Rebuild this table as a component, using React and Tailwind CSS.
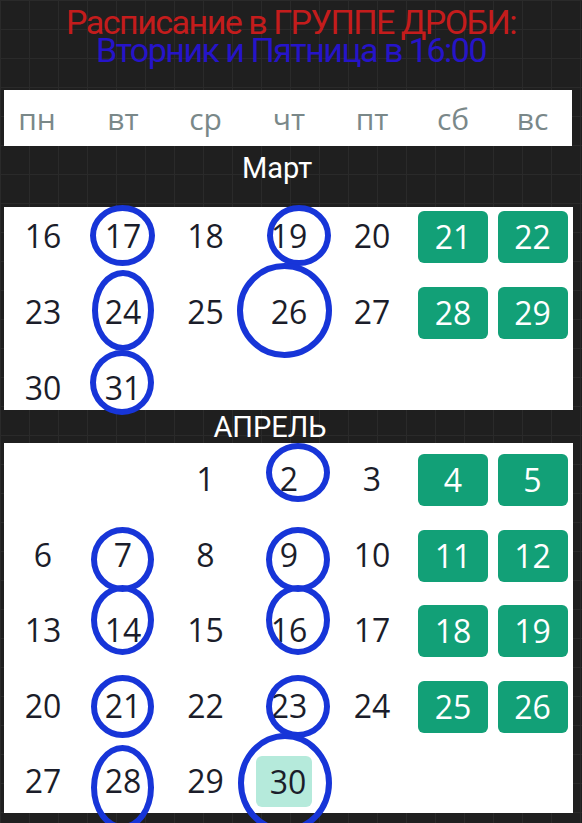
import React from 'react';

const cols = 'grid grid-cols-[78px_82px_83px_84px_82px_80px_79px]';
const num = "font-['Open_Sans',sans-serif] text-[32px] text-[#1b1d2a]";

const march = [
  [16, 17, 18, 19, 20, 21, 22],
  [23, 24, 25, 26, 27, 28, 29],
  [30, 31, null, null, null, null, null],
];

const april = [
  [null, null, 1, 2, 3, 4, 5],
  [6, 7, 8, 9, 10, 11, 12],
  [13, 14, 15, 16, 17, 18, 19],
  [20, 21, 22, 23, 24, 25, 26],
  [27, 28, 29, 30, null, null, null],
];

// hand-drawn marks over the dates
const marks = [
  'left-[90px] top-[205px] w-[65px] h-[61px]',
  'left-[267px] top-[205px] w-[64px] h-[61px]',
  'left-[92px] top-[270px] w-[62px] h-[81px]',
  'left-[237px] top-[263px] w-[95px] h-[95px]',
  'left-[90px] top-[350px] w-[64px] h-[65px]',
  'left-[266px] top-[443px] w-[64px] h-[59px]',
  'left-[91px] top-[527px] w-[63px] h-[65px]',
  'left-[266px] top-[527px] w-[64px] h-[65px]',
  'left-[91px] top-[585px] w-[63px] h-[70px]',
  'left-[266px] top-[585px] w-[64px] h-[70px]',
  'left-[91px] top-[675px] w-[63px] h-[63px]',
  'left-[266px] top-[675px] w-[64px] h-[63px]',
  'left-[91px] top-[745px] w-[63px] h-[85px]',
  'left-[238px] top-[733px] w-[94px] h-[100px]',
];

const Cell = ({ day, col, today }) => {
  if (day === null) return <div />;
  if (col >= 5) {
    return (
      <div className="flex items-start justify-center">
        <div className="flex h-[52px] w-[70px] items-center justify-center rounded-md bg-[#12a077] font-['Open_Sans',sans-serif] text-[32px] text-white">
          {day}
        </div>
      </div>
    );
  }
  if (today) {
    return (
      <div className="flex items-start justify-center">
        <div className={`ml-[-10px] flex h-[51px] w-[56px] items-center justify-center rounded-md bg-[#b5eadb] pl-[8px] ${num}`}>
          {day}
        </div>
      </div>
    );
  }
  return (
    <div className="flex items-start justify-center">
      <div className={`flex h-[50px] items-center justify-center ${num}`}>{day}</div>
    </div>
  );
};

const Month = ({ rows, rowClass }) => (
  <>
    {rows.map((r, i) => (
      <div key={i} className={`${cols} ${rowClass}`}>
        {r.map((d, j) => (
          <Cell key={j} day={d} col={j} today={d === 30 && j === 3} />
        ))}
      </div>
    ))}
  </>
);

export default function App() {
  return (
    <div className="relative h-[823px] w-[582px] overflow-hidden bg-[#1f1f1f] bg-[linear-gradient(to_right,#2a2a2a_1px,transparent_1px),linear-gradient(to_bottom,#2a2a2a_1px,transparent_1px)] bg-[size:29px_29px]">
      <div className="flex h-[90px] flex-col items-center pt-[8px] font-['Roboto',sans-serif] text-[34px] leading-[28px] tracking-[-1.5px]">
        <div className="text-[#c41c1c]">Расписание в ГРУППЕ ДРОБИ:</div>
        <div className="text-[#2614c9]">Вторник и Пятница в 16:00</div>
      </div>

      <div className={`${cols} mx-[4px] h-[56px] w-[568px] items-center bg-white font-['Open_Sans',sans-serif] text-[30px] text-[#7a8889]`}>
        {['пн', 'вт', 'ср', 'чт', 'пт', 'сб', 'вс'].map((d, i) => (
          <div key={d} className={i === 0 ? 'pr-[12px] text-center' : 'text-center'}>{d}</div>
        ))}
      </div>

      <div className="flex h-[61px] justify-center pr-[28px] pt-[1px] font-['Roboto',sans-serif] text-[29px] text-white">Март</div>

      <div className="mx-[4px] h-[203px] w-[569px] overflow-hidden bg-white pt-[4px]">
        <Month rows={march} rowClass="h-[76px]" />
      </div>

      <div className="flex h-[33px] items-end justify-center overflow-hidden pr-[42px] font-['Roboto',sans-serif] text-[29px] leading-[32px] text-white">
        АПРЕЛЬ
      </div>

      <div className="mx-[4px] h-[370px] w-[569px] overflow-hidden bg-white pt-[11px]">
        <Month rows={april} rowClass="h-[75.5px]" />
      </div>

      {marks.map((m, i) => (
        <div key={i} className={`absolute rounded-[50%] border-[6px] border-[#1735d8] ${m}`} />
      ))}
    </div>
  );
}
